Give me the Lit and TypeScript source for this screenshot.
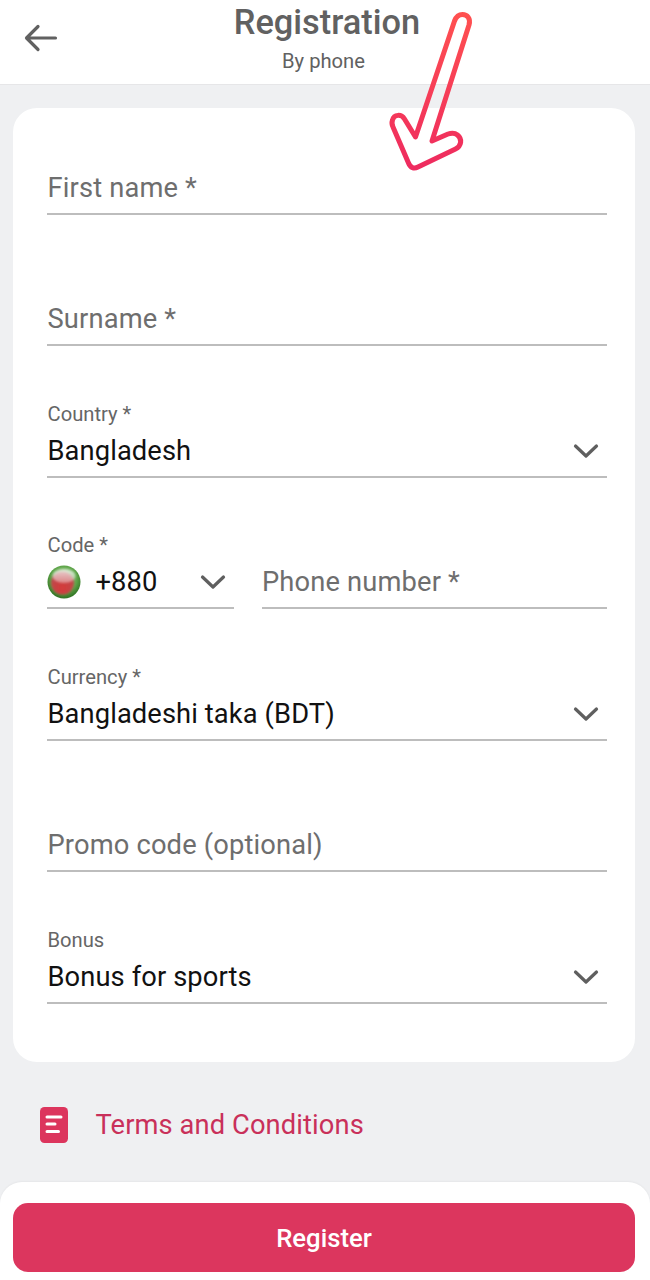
import { LitElement, html, css, svg } from "lit";
import { customElement } from "lit/decorators.js";

const chevron = html`<svg class="chev" width="26" height="16" viewBox="0 0 26 16"><path d="M2.500 3 L13 13 L23.500 3" fill="none" stroke="#5f5f5f" stroke-width="3.200" stroke-linecap="round" stroke-linejoin="round"/></svg>`;

const flag = html`<svg class="flag" width="34" height="34" viewBox="0 0 34 34">
  <defs>
    <radialGradient id="g" cx="50%" cy="40%" r="60%"><stop offset="0" stop-color="#a4d494"/><stop offset="0.65" stop-color="#5ea549"/><stop offset="1" stop-color="#2e7021"/></radialGradient>
    <radialGradient id="r" cx="50%" cy="70%" r="60%"><stop offset="0" stop-color="#d53a3a"/><stop offset="1" stop-color="#bb4a4c"/></radialGradient>
    <linearGradient id="s" x1="0" y1="0" x2="0" y2="1"><stop offset="0" stop-color="#fff" stop-opacity=".75"/><stop offset="1" stop-color="#fff" stop-opacity=".35"/></linearGradient>
    <filter id="b" x="-20%" y="-20%" width="140%" height="140%"><feGaussianBlur stdDeviation="0.900"/></filter>
  </defs>
  <circle cx="17" cy="17" r="16.500" fill="url(#g)"/>
  <circle cx="15.500" cy="18" r="11.500" fill="url(#r)" filter="url(#b)"/>
  <ellipse cx="17" cy="11" rx="11.500" ry="7" fill="url(#s)" filter="url(#b)"/>
</svg>`;

const arrow = svg`<defs><linearGradient id="ag" x1="0" y1="0" x2="0" y2="1"><stop offset="0" stop-color="#ff5050"/><stop offset="1" stop-color="#ee2b5f"/></linearGradient></defs>
<path d="M454.500 21 L415.500 137 L404.500 119 C401.500 114 394 114 392.500 120 C391.500 123 392 125 393 127 L408.500 163 C410.500 168 414 169 418 167 L455.500 149 C461.500 146 462.500 139 457.500 135 C454.500 132.500 451 133 448 134 L432 141 L469 25 C471 18 467 14.500 462.500 14.500 C459 14.500 456 17 454.500 21 Z" fill="none" stroke="url(#ag)" stroke-width="5" stroke-linejoin="round"/>`;

@customElement("app-root")
export class AppRoot extends LitElement {
  static styles = css`
    :host { display: block; width: 650px; height: 1280px; position: relative; overflow: hidden; background: #eff0f2; font-family: Roboto, "Liberation Sans", sans-serif; }
    .page { display: flex; flex-direction: column; height: 1280px; }
    header { height: 85px; flex: none; box-sizing: border-box; background: #fff; border-bottom: 1px solid #e6e6e8; display: flex; flex-direction: column; align-items: center; position: relative; padding-left: 4px; }
    .back { position: absolute; left: 24px; top: 24px; }
    h1 { margin: 3px 0 0; font-size: 34.400px; line-height: 38px; font-weight: 500; color: #616161; }
    .sub { margin-top: 8px; font-size: 20.200px; line-height: 24px; color: #616161; margin-left: -7px; }
    .card { flex: none; margin: 23px 15px 0 13px; padding: 7px 28px 58px 34px; background: #fff; border-radius: 24px; display: flex; flex-direction: column; gap: 31.450px; }
    .field { height: 100px; display: flex; flex-direction: column; justify-content: flex-end; border-bottom: 2px solid #bdbdbd; box-sizing: border-box; }
    .label { font-size: 20.200px; line-height: 24px; color: #666; margin-bottom: 8px; padding-left: 0.500px; }
    .row { display: flex; align-items: center; height: 42px; box-sizing: border-box; padding: 0 0 8px 0.500px; font-size: 27.300px; color: #111; letter-spacing: 0.1px; }
    .row.ph { color: #6e6e6e; letter-spacing: 0.15px; }
    .row span { flex: 1; }
    .chev { flex: none; margin-right: 8px; }
    .double { display: flex; gap: 28px; height: 100px; }
    .double .code { width: 187px; flex: none; }
    .double .phone { flex: 1; }
    .double .phone .row { padding-left: 0; }
    .flag { flex: none; margin: 0 14.500px 0 -0.500px; }
    .terms { display: flex; align-items: center; gap: 27.500px; padding: 45px 0 0 40px; font-size: 27.300px; color: #c9305a; letter-spacing: 0.1px; }
    .foot { margin-top: auto; background: #fff; border-radius: 22px 22px 0 0; height: 98px; box-sizing: border-box; padding: 21px 15px 0 13px; box-shadow: 0 -1px 2px rgba(0,0,0,.04); }
    button { all: unset; display: flex; align-items: center; justify-content: center; box-sizing: border-box; width: 100%; height: 69px; background: #dc365e; color: #fff; border-radius: 15px; font-size: 25.700px; font-weight: 500; font-family: inherit; }
    .arrow { position: absolute; left: 0; top: 0; pointer-events: none; }
  `;

  private select(label: string, value: string) {
    return html`<div class="field"><div class="label">${label}</div><div class="row"><span>${value}</span>${chevron}</div></div>`;
  }
  private input(ph: string) {
    return html`<div class="field"><div class="row ph"><span>${ph}</span></div></div>`;
  }

  render() {
    return html`
      <div class="page">
        <header>
          <svg class="back" width="34" height="28" viewBox="0 0 34 28"><path d="M31.500 14 H3 M14 2.500 L2.500 14 L14 25.500" fill="none" stroke="#616161" stroke-width="3.200" stroke-linecap="round" stroke-linejoin="round"/></svg>
          <h1>Registration</h1>
          <div class="sub">By phone</div>
        </header>
        <main class="card">
          ${this.input("First name *")}
          ${this.input("Surname *")}
          ${this.select("Country *", "Bangladesh")}
          <div class="double">
            <div class="field code"><div class="label">Code *</div><div class="row">${flag}<span>+880</span>${chevron}</div></div>
            <div class="field phone"><div class="row ph"><span>Phone number *</span></div></div>
          </div>
          ${this.select("Currency *", "Bangladeshi taka (BDT)")}
          ${this.input("Promo code (optional)")}
          ${this.select("Bonus", "Bonus for sports")}
        </main>
        <div class="terms">
          <svg width="28" height="36" viewBox="0 0 28 36"><rect x="0" y="0" width="28" height="36" rx="4.500" fill="#dc355d"/><path d="M7 10 H21 M7 17 H15 M7 24.500 H18.500" stroke="#fff" stroke-width="3" stroke-linecap="round"/></svg>
          <span>Terms and Conditions</span>
        </div>
        <footer class="foot"><button>Register</button></footer>
      </div>
      <svg class="arrow" width="650" height="200" viewBox="0 0 650 200">${arrow}</svg>
    `;
  }
}
